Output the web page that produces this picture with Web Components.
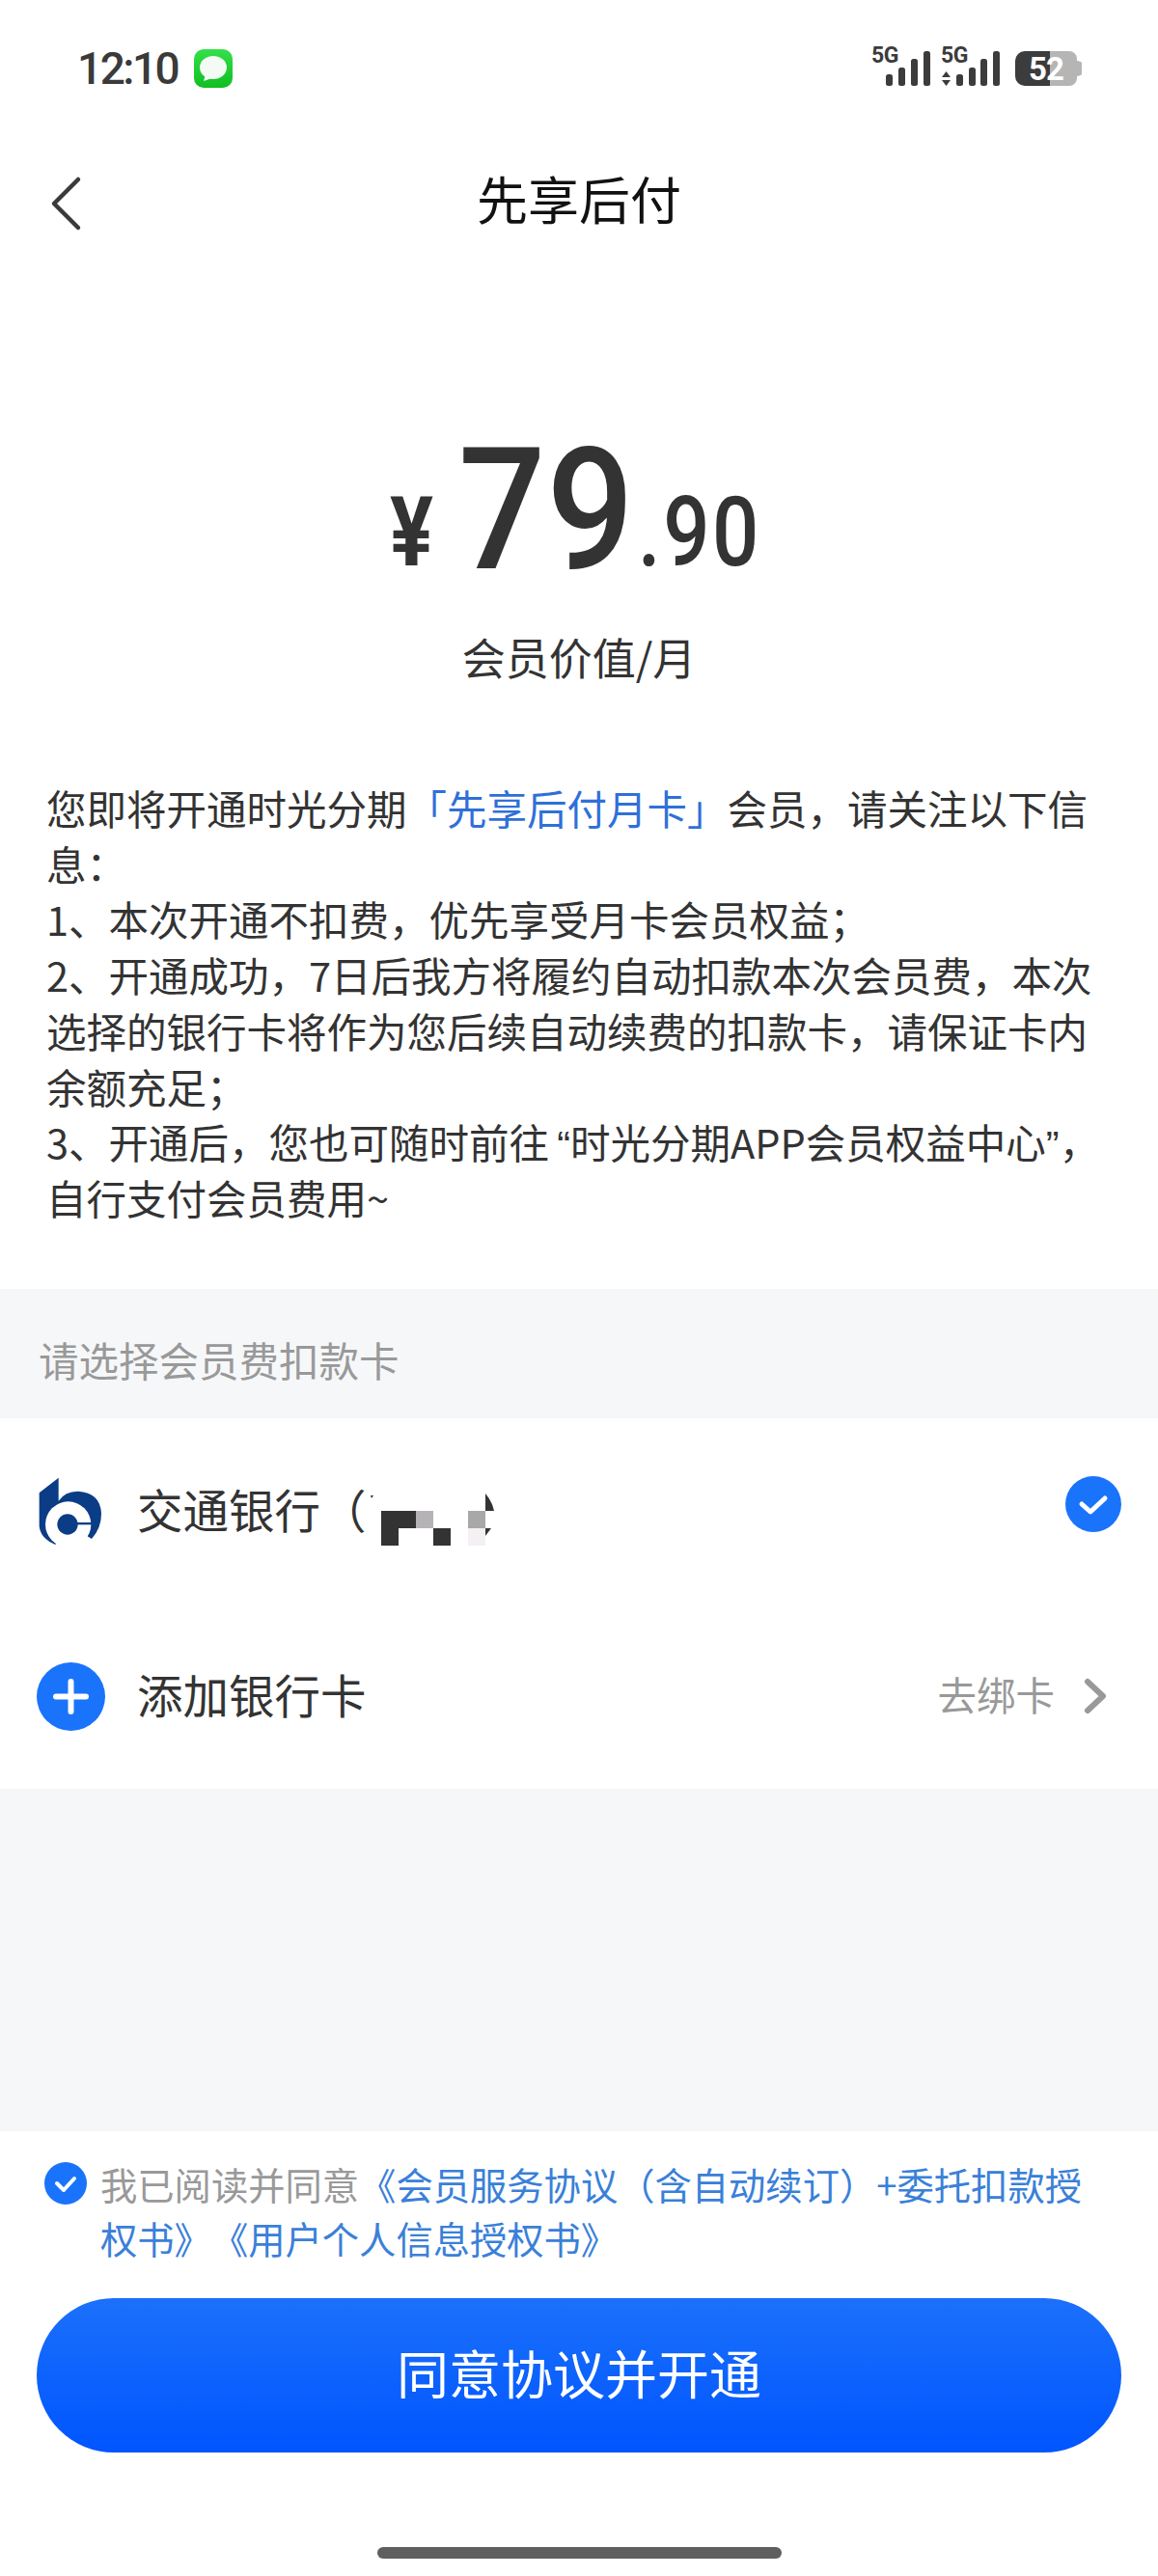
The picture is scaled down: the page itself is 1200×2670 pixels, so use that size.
<!DOCTYPE html>
<html lang="zh-CN">
<head>
<meta charset="utf-8">
<title>先享后付</title>
<style>
  html, body { margin: 0; padding: 0; background: #fff; }
  body { font-family: "Noto Sans CJK SC", "Noto Sans", sans-serif; color: #333; }
  .page { display: flex; flex-direction: column; width: 1200px; height: 2670px; overflow: hidden; }
</style>
</head>
<body>
<div class="page">
  <status-bar time="12:10"></status-bar>
  <nav-header>先享后付</nav-header>
  <price-hero int="79" dec=".90">会员价值/月</price-hero>
  <notice-block>
    您即将开通时光分期<em>「先享后付月卡」</em>会员，请关注以下信<br>息：<br>
    1、本次开通不扣费，优先享受月卡会员权益；<br>
    2、开通成功，7日后我方将履约自动扣款本次会员费，本次<br>选择的银行卡将作为您后续自动续费的扣款卡，请保证卡内<br>余额充足；<br>
    3、开通后，您也可随时前往<i class="lq">“</i>时光分期APP会员权益中心<i class="rq">”</i>，<br>自行支付会员费用~
  </notice-block>
  <section-label>请选择会员费扣款卡</section-label>
  <pay-row>
    <bank-logo slot="icon"></bank-logo>
    交通银行（<masked-number></masked-number>
    <check-mark slot="end"></check-mark>
  </pay-row>
  <pay-row>
    <add-icon slot="icon"></add-icon>
    添加银行卡
    <unbind-link slot="end">去绑卡</unbind-link>
  </pay-row>
  <gray-fill></gray-fill>
  <agree-footer>
    我已阅读并同意<a>《会员服务协议（含自动续订）+委托扣款授<br>权书》《用户个人信息授权书》</a>
  </agree-footer>
</div>

<script>
// barre de statut
class StatusBar extends HTMLElement {
  constructor() {
    super();
    this.attachShadow({ mode: 'open' });
    this.shadowRoot.innerHTML = `
      <style>
        :host { display: flex; align-items: center; justify-content: space-between; height: 144px; padding: 0 79px 2px 80px; box-sizing: border-box; }
        .left { display: flex; align-items: center; gap: 17px; }
        .time { font: 500 46px/1 Roboto, "Noto Sans", sans-serif; color: #3a3a3a; letter-spacing: -2.5px; }
        svg { display: block; }
        .net { margin-bottom: 8px; }
      </style>
      <div class="left">
        <span class="time">${this.getAttribute('time')}</span>
        <svg width="40" height="40" viewBox="0 0 40 40">
          <defs><linearGradient id="g" x1="0" y1="0" x2="0" y2="1"><stop offset="0" stop-color="#35e04a"/><stop offset="1" stop-color="#10bd22"/></linearGradient></defs>
          <rect width="40" height="40" rx="10" fill="url(#g)"/>
          <ellipse cx="20" cy="19" rx="14" ry="12" fill="#f4fbf4"/>
          <path d="M12 26 L10 33 L19 30 Z" fill="#f4fbf4"/>
        </svg>
      </div>
      <svg class="net" width="218" height="54" viewBox="0 -8 218 54">
        <g fill="#3c3c3c">
          <text x="0" y="17" font-family="Roboto, sans-serif" font-weight="700" font-size="23" letter-spacing="-.5">5G</text>
          <rect x="15" y="29" width="7" height="12" rx="2.5"/>
          <rect x="28" y="22" width="7" height="19" rx="2.5"/>
          <rect x="41" y="13" width="7" height="28" rx="2.5"/>
          <rect x="54" y="5" width="7" height="36" rx="2.5"/>
          <text x="72" y="17" font-family="Roboto, sans-serif" font-weight="700" font-size="23" letter-spacing="-.5">5G</text>
          <path d="M73 32 L77.500 26 L82 32 Z M73 35 L82 35 L77.500 41 Z"/>
          <rect x="88" y="29" width="7" height="12" rx="2.5"/>
          <rect x="101" y="22" width="7" height="19" rx="2.5"/>
          <rect x="113" y="13" width="7" height="28" rx="2.5"/>
          <rect x="126" y="5" width="7" height="36" rx="2.5"/>
        </g>
        <path d="M185 5 H205 a8 8 0 0 1 8 8 V15 a5 5 0 0 1 0 16 V33 a8 8 0 0 1 -8 8 H185 Z" fill="#b5b5b5"/>
        <path d="M185 5 H159 a10 10 0 0 0 -10 10 V31 a10 10 0 0 0 10 10 H185 Z" fill="#3c3c3c"/>
        <text x="163" y="35" font-family="Roboto, sans-serif" font-weight="700" font-size="33" fill="#fff" letter-spacing="-1">52</text>
      </svg>
    `;
  }
}

class NavHeader extends HTMLElement {
  constructor() {
    super();
    this.attachShadow({ mode: 'open' });
    this.shadowRoot.innerHTML = `
      <style>
        :host { display: block; position: relative; height: 122px; }
        .bar { display: flex; align-items: center; justify-content: center; height: 100%; font-size: 53px; line-height: 1; color: #111; box-sizing: border-box; }
        svg { position: absolute; left: 52px; top: 38px; }
      </style>
      <svg width="34" height="58" viewBox="0 0 34 58"><path d="M29 4 L4 29 L29 54" fill="none" stroke="#3a3a3a" stroke-width="4.500" stroke-linecap="round" stroke-linejoin="round"/></svg>
      <div class="bar"><slot></slot></div>
    `;
  }
}

class PriceHero extends HTMLElement {
  constructor() {
    super();
    this.attachShadow({ mode: 'open' });
    this.shadowRoot.innerHTML = `
      <style>
        :host { display: flex; flex-direction: column; align-items: center; height: 543px; box-sizing: border-box; padding-top: 190px; color: #333; }
        .amount { display: flex; align-items: baseline; height: 146px; font-family: Roboto, sans-serif; font-weight: 500; line-height: 146px; white-space: nowrap; }
        .amount span { display: block; transform-origin: 0 50%; }
        .cur { width: 71px; font-size: 100px; font-weight: 700; transform: translateY(-3px) scaleX(.84); }
        .int { width: 186px; font-size: 177px; letter-spacing: 1px; transform: scaleX(.9); }
        .dec { width: 135px; font-size: 100px; letter-spacing: 3px; transform: translateY(-3px) scaleX(.85); }
        .label { margin-top: 49px; font-size: 45px; line-height: 60px; color: #333; }
      </style>
      <div class="amount"><span class="cur">¥</span><span class="int">${this.getAttribute('int')}</span><span class="dec">${this.getAttribute('dec')}</span></div>
      <div class="label"><slot></slot></div>
    `;
  }
}

class NoticeBlock extends HTMLElement {
  constructor() {
    super();
    this.attachShadow({ mode: 'open' });
    this.shadowRoot.innerHTML = `
      <style>
        :host { display: block; height: 527px; box-sizing: border-box; padding: 0 20px 0 48px; font-size: 41.500px; line-height: 57.700px; color: #333; white-space: nowrap; }
        ::slotted(em) { font-style: normal; color: #2f70d8; }
        ::slotted(i) { display: inline-block; font-style: normal; line-height: 1; font-family: "Liberation Sans", sans-serif; }
        ::slotted(.lq) { width: 22px; text-align: right; }
        ::slotted(.rq) { width: 14px; text-align: left; }
      </style>
      <slot></slot>
    `;
  }
}

class SectionLabel extends HTMLElement {
  constructor() {
    super();
    this.attachShadow({ mode: 'open' });
    this.shadowRoot.innerHTML = `
      <style>
        :host { display: flex; align-items: center; height: 134px; padding: 12px 0 0 40px; box-sizing: border-box; background: #f6f7f9; font-size: 41.500px; color: #999; }
      </style>
      <slot></slot>
    `;
  }
}

class PayRow extends HTMLElement {
  constructor() {
    super();
    this.attachShadow({ mode: 'open' });
    this.shadowRoot.innerHTML = `
      <style>
        :host { display: flex; align-items: center; height: 192px; padding: 0 38px; box-sizing: border-box; background: #fff; font-size: 47.500px; color: #333; }
        .icon { display: flex; justify-content: center; width: 71px; margin-right: 33px; }
        .main { display: flex; align-items: center; flex: 1; padding-bottom: 5px; }
      </style>
      <div class="icon"><slot name="icon"></slot></div>
      <div class="main"><slot></slot></div>
      <slot name="end"></slot>
    `;
  }
}

class BankLogo extends HTMLElement {
  constructor() {
    super();
    this.attachShadow({ mode: 'open' });
    this.shadowRoot.innerHTML = `
      <style>:host { display: block; height: 72px; margin-top: 2px; } svg { display: block; }</style>
      <svg width="68" height="72" viewBox="33 36 204 216">
        <path d="M95 38 L35 85 V190 Q40 228 85 246 L125 183 L198 228 Q228 195 228 150 Q226 84 155 80 Q115 80 95 110 Z" fill="#0b3d86"/>
        <circle cx="125" cy="183" r="71" fill="#fff"/>
        <circle cx="123" cy="183" r="32" fill="#0b3d86"/>
        <rect x="150" y="177" width="60" height="7" fill="#0b3d86"/>
      </svg>
    `;
  }
}

// le numéro de carte masqué
class MaskedNumber extends HTMLElement {
  constructor() {
    super();
    this.attachShadow({ mode: 'open' });
    this.shadowRoot.innerHTML = `
      <style>:host { display: block; margin-top: 23px; margin-left: -1px; } svg { display: block; }</style>
      <svg width="135" height="60" viewBox="0 0 135 60">
        <path d="M5 5 L8 5 L6 8 Z" fill="#333"/>
        <rect x="16" y="21" width="36" height="18" fill="#333"/>
        <rect x="16" y="39" width="18" height="18" fill="#333"/>
        <rect x="52" y="21" width="18" height="18" fill="#b5b3b5"/>
        <rect x="70" y="39" width="18" height="18" fill="#333"/>
        <rect x="106" y="21" width="18" height="18" fill="#a8a8a8"/>
        <rect x="106" y="39" width="18" height="18" fill="#f4f0f4"/>
        <path d="M124 3 Q131 11 133 21 H124 Z M124 39 H130 L124 47 Z" fill="#333"/>
      </svg>
    `;
  }
}

class CheckMark extends HTMLElement {
  constructor() {
    super();
    this.attachShadow({ mode: 'open' });
    this.shadowRoot.innerHTML = `
      <style>:host { display: block; margin-bottom: 14px; } svg { display: block; }</style>
      <svg width="58" height="58" viewBox="0 0 58 58">
        <circle cx="29" cy="29" r="29" fill="#1a73fb"/>
        <path d="M17 29 L26 37 L41 23" fill="none" stroke="#fff" stroke-width="5" stroke-linecap="round" stroke-linejoin="round"/>
      </svg>
    `;
  }
}

class AddIcon extends HTMLElement {
  constructor() {
    super();
    this.attachShadow({ mode: 'open' });
    this.shadowRoot.innerHTML = `
      <style>:host { display: block; } svg { display: block; }</style>
      <svg width="71" height="71" viewBox="0 0 71 71">
        <circle cx="35.500" cy="35.500" r="35.500" fill="#1a73fb"/>
        <path d="M20 35.500 H51 M35.500 20 V51" fill="none" stroke="#fff" stroke-width="6" stroke-linecap="round"/>
      </svg>
    `;
  }
}

class UnbindLink extends HTMLElement {
  constructor() {
    super();
    this.attachShadow({ mode: 'open' });
    this.shadowRoot.innerHTML = `
      <style>
        :host { display: flex; align-items: center; gap: 30px; margin-right: 15px; font-size: 40.500px; color: #999; }
        .txt { padding-bottom: 6px; }
        svg { display: block; }
      </style>
      <div class="txt"><slot></slot></div>
      <svg width="24" height="38" viewBox="0 0 24 38"><path d="M4 4 L20 19 L4 34" fill="none" stroke="#999" stroke-width="6" stroke-linecap="round" stroke-linejoin="round"/></svg>
    `;
  }
}

class GrayFill extends HTMLElement {
  constructor() {
    super();
    this.attachShadow({ mode: 'open' });
    this.shadowRoot.innerHTML = `<style>:host { display: block; flex: 1; background: #f6f7f9; }</style>`;
  }
}

class AgreeFooter extends HTMLElement {
  constructor() {
    super();
    this.attachShadow({ mode: 'open' });
    this.shadowRoot.innerHTML = `
      <style>
        :host { display: flex; flex-direction: column; height: 461px; box-sizing: border-box; padding: 27px 38px 0 46px; background: #fff; }
        .agree { display: flex; gap: 14px; font-size: 38.300px; line-height: 56px; color: #999; white-space: nowrap; text-spacing-trim: space-all; }
        svg { display: block; flex: none; margin-top: 5px; }
        ::slotted(a) { color: #3a80d8; }
        .go { display: flex; align-items: center; justify-content: center; height: 160px; margin: 34px 0 0 -8px; border-radius: 80px; background: linear-gradient(180deg, #1b70fb, #0055ff); color: #fff; font-size: 54px; padding-bottom: 8px; box-sizing: border-box; }
        .home { width: 419px; height: 12px; margin: 98px auto 0; border-radius: 6px; background: #5f5f5f; transform: translateX(-4px); }
      </style>
      <div class="agree">
        <svg width="44" height="44" viewBox="0 0 44 44">
          <circle cx="22" cy="22" r="22" fill="#1a73fb"/>
          <path d="M13 22 L20 29 L31 17" fill="none" stroke="#fff" stroke-width="4" stroke-linecap="round" stroke-linejoin="round"/>
        </svg>
        <div><slot></slot></div>
      </div>
      <div class="go">同意协议并开通</div>
      <div class="home"></div>
    `;
  }
}

customElements.define('status-bar', StatusBar);
customElements.define('nav-header', NavHeader);
customElements.define('price-hero', PriceHero);
customElements.define('notice-block', NoticeBlock);
customElements.define('section-label', SectionLabel);
customElements.define('pay-row', PayRow);
customElements.define('bank-logo', BankLogo);
customElements.define('masked-number', MaskedNumber);
customElements.define('check-mark', CheckMark);
customElements.define('add-icon', AddIcon);
customElements.define('unbind-link', UnbindLink);
customElements.define('gray-fill', GrayFill);
customElements.define('agree-footer', AgreeFooter);
</script>
</body>
</html>
